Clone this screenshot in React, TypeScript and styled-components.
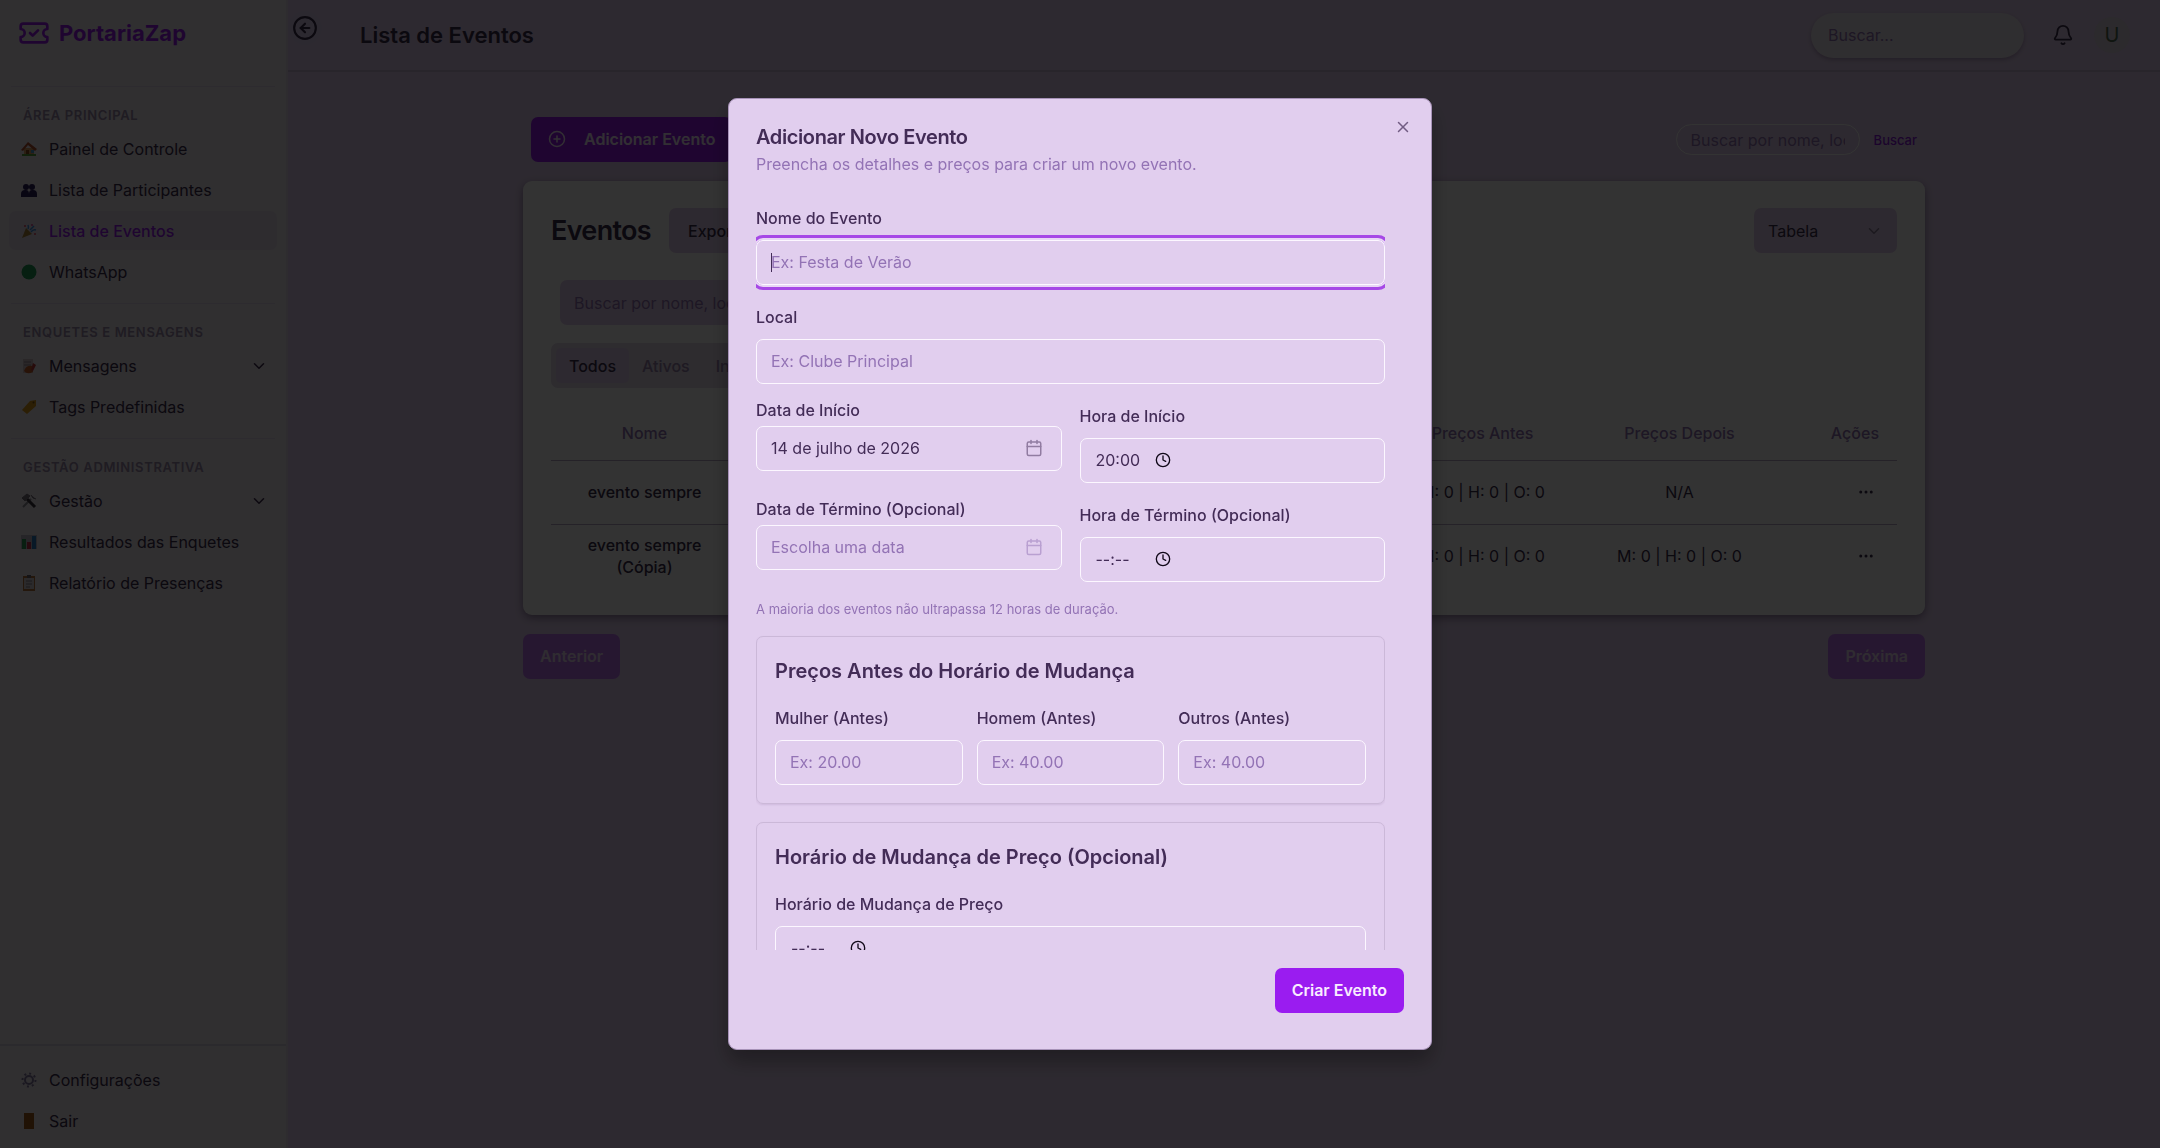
import React from "react";
import styled, { createGlobalStyle, css } from "styled-components";
import {
  Bell,
  Calendar,
  ChevronDown,
  CircleArrowLeft,
  CirclePlus,
  Clock,
  Ellipsis,
  TicketCheck,
  X,
} from "lucide-react";

const color = {
  lavender: "#e1ceee",
  sidebar: "#efe8f1",
  white: "#ffffff",
  ink: "#432c57",
  text: "#3b2d4c",
  muted: "#9373b5",
  primary: "#9a1cf0",
  line: "#cbb8d8",
};

const GlobalStyle = createGlobalStyle`
  *, *::before, *::after { box-sizing: border-box; }
  body {
    margin: 0;
    background: ${color.lavender};
    color: ${color.text};
    font-family: Inter, "Liberation Sans", sans-serif;
    font-size: 16px;
    line-height: 22px;
  }
  button, input, select { font: inherit; color: inherit; margin: 0; }
  button { cursor: pointer; }
  h1, h2, h3, p, ul { margin: 0; padding: 0; }
`;

/* ---------- shell ---------- */

const Shell = styled.div`
  display: grid;
  grid-template-columns: 288px minmax(0, 1fr);
  min-height: 100vh;
`;

const Sidebar = styled.aside`
  display: flex;
  flex-direction: column;
  background: ${color.sidebar};
  border-right: 2px solid #e6dcea;
`;

const Brand = styled.a`
  display: flex;
  align-items: center;
  gap: 9px;
  height: 66px;
  padding: 0 18px;
  margin-bottom: 20px;
  color: ${color.primary};
  font-size: 22px;
  font-weight: 700;
  text-decoration: none;
`;

const NavGroup = styled.section`
  margin: 0 11px;
  padding: 17px 0 10px;
  border-top: 1px solid #e2d6e8;
`;

const NavTitle = styled.h2`
  padding: 0 12px;
  margin-bottom: 3px;
  font-size: 13px;
  line-height: 22px;
  font-weight: 600;
  letter-spacing: 0.05em;
  text-transform: uppercase;
  color: #9b8aab;
`;

const NavList = styled.ul`
  list-style: none;
`;

const NavLink = styled.a<{ $active?: boolean }>`
  display: flex;
  align-items: center;
  gap: 12px;
  height: 39px;
  margin: 0 -2px 2px;
  padding: 0 9px 0 12px;
  border-radius: 7px;
  color: ${color.text};
  text-decoration: none;
  svg:last-child { margin-left: auto; }
  ${(p) =>
    p.$active &&
    css`
      background: #e6dceb;
      color: ${color.primary};
      font-weight: 500;
    `}
`;

const NavFooter = styled.nav`
  margin-top: auto;
  padding: 14px 11px 6px;
  border-top: 2px solid #d8cfe0;
`;

const Main = styled.div`
  display: flex;
  flex-direction: column;
  min-width: 0;
`;

const Header = styled.header`
  display: flex;
  align-items: center;
  height: 72px;
  padding-right: 30px;
  border-bottom: 2px solid #c8b8d4;
`;

const Collapse = styled.button`
  display: grid;
  place-items: center;
  align-self: flex-start;
  width: 34px;
  height: 34px;
  margin: 11px 38px 0 0;
  padding: 0;
  border: 0;
  border-radius: 50%;
  background: #dccdf0;
`;

const PageTitle = styled.h1`
  margin-right: auto;
  font-size: 22px;
  line-height: 30px;
  font-weight: 600;
`;

const HeaderSearch = styled.input`
  width: 213px;
  height: 45px;
  margin-right: 21px;
  padding: 0 17px;
  border: 0;
  border-radius: 23px;
  background: #ece4ee;
  box-shadow: 0 2px 4px rgba(60, 30, 80, 0.3);
  &::placeholder { color: ${color.muted}; opacity: 1; }
`;

const IconButton = styled.button`
  display: grid;
  place-items: center;
  width: 36px;
  height: 36px;
  padding: 0;
  border: 0;
  background: none;
`;

const Avatar = styled.span`
  display: grid;
  place-items: center;
  width: 36px;
  height: 36px;
  margin-left: 13px;
  border-radius: 50%;
  background: #dccfe0;
  font-size: 20px;
  color: #4f6b50;
`;

const Content = styled.main`
  width: calc(100% - 54px);
  max-width: 1402px;
  margin: 0 auto;
  padding-top: 45px;
`;

const Toolbar = styled.div`
  display: flex;
  justify-content: space-between;
  align-items: center;
  padding: 0 8px;
  margin-bottom: 19px;
`;

const PrimaryButton = styled.button<{ $gap?: number }>`
  display: inline-flex;
  align-items: center;
  gap: ${(p) => p.$gap ?? 0}px;
  height: 45px;
  padding: 0 17px 2px;
  border: 0;
  border-radius: 7px;
  background: ${color.primary};
  color: #f9ecff;
  font-weight: 600;
  &:disabled { opacity: 0.5; }
`;

const FilterForm = styled.form`
  display: flex;
  align-items: center;
  gap: 14px;
`;

const FilterInput = styled.input`
  width: 184px;
  height: 31px;
  padding: 0 14px;
  border: 1px solid #ffffff;
  border-radius: 16px;
  background: transparent;
  &::placeholder { color: ${color.muted}; opacity: 1; }
`;

const FilterButton = styled.button`
  padding: 0;
  border: 0;
  background: none;
  font-size: 13px;
  font-weight: 500;
  color: #8a18dc;
`;

const Card = styled.section`
  padding: 27px 28px;
  border-radius: 9px;
  background: ${color.white};
  box-shadow: 0 3px 8px rgba(40, 20, 60, 0.45);
`;

const CardHead = styled.div`
  display: flex;
  align-items: center;
  gap: 18px;
  margin-bottom: 27px;
`;

const CardTitle = styled.h2`
  font-size: 27px;
  line-height: 36px;
  font-weight: 600;
  letter-spacing: -0.025em;
`;

const ExportButton = styled.button`
  height: 45px;
  padding: 0 19px;
  border: 0;
  border-radius: 7px;
  background: ${color.lavender};
  font-weight: 500;
`;

const SelectWrap = styled.div`
  display: grid;
  align-items: center;
  width: 143px;
  margin-left: auto;
  & > * { grid-area: 1 / 1; }
  svg { justify-self: end; margin-right: 14px; opacity: 0.5; pointer-events: none; }
`;

const Select = styled.select`
  appearance: none;
  width: 100%;
  height: 45px;
  padding: 0 14px;
  border: 0;
  border-radius: 7px;
  background: ${color.lavender};
`;

const CardSearch = styled.input`
  display: block;
  width: 432px;
  height: 45px;
  margin: 0 0 18px 9px;
  padding: 0 14px;
  border: 0;
  border-radius: 7px;
  background: ${color.lavender};
  &::placeholder { color: ${color.muted}; opacity: 1; }
`;

const Tabs = styled.div`
  display: flex;
  width: fit-content;
  height: 45px;
  padding: 5px;
  margin-bottom: 18px;
  border-radius: 7px;
  background: #e4d9ea;
`;

const Tab = styled.button<{ $active?: boolean }>`
  padding: 0 13px;
  border: 0;
  border-radius: 5px;
  background: ${(p) => (p.$active ? color.lavender : "transparent")};
  color: ${(p) => (p.$active ? color.text : "#9780ac")};
  font-weight: 500;
`;

const Table = styled.table`
  width: 100%;
  table-layout: fixed;
  border-collapse: collapse;
  text-align: center;
  th { height: 54px; padding: 0 18px; font-weight: 500; color: ${color.muted}; }
  td { height: 64px; padding: 9px 18px; }
  th:last-child, td:last-child { text-align: right; }
  thead tr, tbody tr:not(:last-child) { border-bottom: 1px solid #b9aac6; }
`;

const Col = styled.col<{ $w?: number }>`
  width: ${(p) => (p.$w ? `${p.$w}px` : "auto")};
`;

const NameCell = styled.td`
  font-weight: 500;
`;

const RowMenu = styled.button`
  width: 26px;
  height: 36px;
  padding: 0;
  border: 0;
  background: none;
  vertical-align: middle;
  svg { display: block; margin: auto; }
`;

const Pager = styled.nav`
  display: flex;
  justify-content: space-between;
  margin-top: 19px;
`;

/* ---------- dialog ---------- */

const Overlay = styled.div`
  position: fixed;
  inset: 0;
  display: grid;
  place-items: center;
  background: rgba(0, 0, 0, 0.8);
`;

const Dialog = styled.div`
  position: relative;
  display: flex;
  flex-direction: column;
  width: 704px;
  max-width: 100%;
  max-height: calc(100vh - 196px);
  padding: 28px 27px 36px;
  border: 1px solid #a792b8;
  border-radius: 9px;
  background: ${color.lavender};
  color: ${color.ink};
  box-shadow: 0 12px 20px rgba(0, 0, 0, 0.3);
`;

const DialogTitle = styled.h2`
  font-size: 20px;
  line-height: 20px;
  font-weight: 600;
  letter-spacing: -0.02em;
`;

const DialogText = styled.p`
  margin: 6px 0 18px;
  line-height: 23px;
  color: ${color.muted};
`;

const CloseButton = styled.button`
  position: absolute;
  top: 19px;
  right: 19px;
  padding: 0;
  border: 0;
  background: none;
  opacity: 0.7;
  svg { display: block; }
`;

const FormScroll = styled.div`
  flex: 1 1 auto;
  min-height: 0;
  overflow-y: auto;
  scrollbar-width: none;
  margin-right: 19px;
  padding: 10px 0;
  display: flex;
  flex-direction: column;
  gap: 18px;
  & > * { flex-shrink: 0; }
`;

const Field = styled.div<{ $tight?: boolean }>`
  display: flex;
  flex-direction: column;
  gap: ${(p) => (p.$tight ? 8 : 7)}px;
  min-width: 0;
  label {
    font-weight: 500;
    line-height: ${(p) => (p.$tight ? 16 : 29)}px;
  }
`;

const boxStyle = css`
  width: 100%;
  height: 45px;
  padding: 0 14px 1px;
  border: 1px solid #fcf7ff;
  border-radius: 7px;
  background: transparent;
`;

const Input = styled.input`
  ${boxStyle}
  outline: none;
  &:focus {
    caret-color: transparent;
    box-shadow: 0 0 0 2px #e8d6f5, 0 0 0 5px #a648e6;
  }
  &::placeholder { color: ${color.muted}; opacity: 1; }
`;

const CaretBox = styled.div`
  position: relative;
  display: flex;
  &:focus-within::after {
    content: "";
    position: absolute;
    left: 15px;
    top: 13px;
    width: 1px;
    height: 19px;
    background: ${color.ink};
  }
`;

const DateButton = styled.button<{ $empty?: boolean }>`
  ${boxStyle}
  display: flex;
  align-items: center;
  justify-content: space-between;
  padding-right: 18px;
  color: ${(p) => (p.$empty ? color.muted : color.ink)};
  svg { opacity: 0.5; }
`;

const TimeBox = styled.div`
  ${boxStyle}
  display: flex;
  align-items: center;
  padding-left: 15px;
  svg { color: #100818; }
`;

const TimeInput = styled.input`
  width: 59px;
  padding: 0;
  border: 0;
  outline: none;
  background: transparent;
  &::placeholder { color: ${color.ink}; opacity: 1; }
`;

const TwoCols = styled.div`
  display: grid;
  grid-template-columns: 1fr 1fr;
  gap: 18px;
  align-items: start;
`;

const Hint = styled.p`
  font-size: 13px;
  line-height: 18px;
  color: ${color.muted};
`;

const Panel = styled.section`
  padding: 18px;
  border: 1px solid ${color.line};
  border-radius: 7px;
  box-shadow: 0 1px 2px rgba(80, 40, 110, 0.12);
`;

const PanelTitle = styled.h3`
  margin-bottom: 17px;
  font-size: 20px;
  line-height: 32px;
  font-weight: 600;
`;

const ThreeCols = styled.div`
  display: grid;
  grid-template-columns: repeat(3, minmax(0, 1fr));
  gap: 14px;
`;

const DialogFooter = styled.div`
  display: flex;
  justify-content: flex-end;
  padding-top: 18px;
`;

/* ---------- small coloured nav glyphs ---------- */

const glyphs: Record<string, React.ReactNode> = {
  house: (
    <>
      <rect x="3" y="7" width="10" height="8" fill="#d9a066" />
      <path d="M0 9 7 1l9 7-2 2-7-6-5 6z" fill="#b5502c" />
      <rect x="5" y="9" width="3" height="6" fill="#8a4b22" />
      <rect x="10" y="9" width="3" height="3" fill="#4aa0d8" />
      <rect x="1" y="13" width="14" height="2" fill="#5da33c" />
    </>
  ),
  people: (
    <g fill="#2b1f5c">
      <circle cx="5" cy="5" r="3" />
      <circle cx="11" cy="5" r="3" />
      <path d="M0 15v-3q0-4 4-4h1q3 0 3 4v3zM8 15v-3q0-4 3-4h1q4 0 4 4v3z" />
    </g>
  ),
  party: (
    <>
      <path d="M1 15 5 5l6 6z" fill="#a8813a" />
      <path d="M7 6q1-2 0-4M10 9q2-3 5-2M9 7l4-4" stroke="#3f8fe0" strokeWidth="1.5" fill="none" />
      <circle cx="4" cy="3" r="1" fill="#e0435c" />
      <circle cx="11" cy="2" r="1" fill="#d6439c" />
      <circle cx="14" cy="11" r="1" fill="#e0435c" />
    </>
  ),
  green: <circle cx="8" cy="8" r="7.5" fill="#1f9a55" />,
  memo: (
    <>
      <rect x="2" y="1" width="10" height="14" fill="#cfc0c8" />
      <path d="M3 4h7M3 7h7" stroke="#9a8a96" />
      <path d="M3 13q2-6 8-5l1 6q-6 3-9-1z" fill="#c9622c" />
      <path d="M12 5l3 2-3 6-2-1z" fill="#c03a3a" />
    </>
  ),
  tag: (
    <>
      <path d="M1 11 9 2l6-1v6l-9 8z" fill="#d99a1c" />
      <circle cx="12.5" cy="3.5" r="1" fill="#7a5510" />
    </>
  ),
  tools: (
    <>
      <path d="M2 14 10 6" stroke="#8c8c94" strokeWidth="2" />
      <path d="M5 5l9 9" stroke="#3a343e" strokeWidth="3" />
      <path d="M1 5l5-4 3 2-5 5zM10 2l2 3 3 1" stroke="#77727c" fill="#77727c" />
    </>
  ),
  chart: (
    <>
      <rect x="0" y="1" width="16" height="14" fill="#bdb8c6" />
      <rect x="1" y="5" width="4" height="10" fill="#2c9a58" />
      <rect x="6" y="8" width="4" height="7" fill="#c2364a" />
      <rect x="11" y="2" width="4" height="13" fill="#2c7fc4" />
    </>
  ),
  clipboard: (
    <>
      <rect x="2" y="1" width="12" height="15" fill="#b5743f" />
      <rect x="3" y="3" width="10" height="11" fill="#d8cfd8" />
      <rect x="6" y="0" width="4" height="3" fill="#6a6470" />
      <path d="M5 6h6M5 9h6M5 12h4" stroke="#8a8290" />
    </>
  ),
  gear: (
    <g fill="none" stroke="#8479a0">
      <circle cx="8" cy="8" r="4" strokeWidth="2" />
      <circle cx="8" cy="8" r="6.5" strokeWidth="2" strokeDasharray="2 3" />
    </g>
  ),
  door: <rect x="3" y="0" width="10" height="16" fill="#a05a1c" />,
};

const Glyph = ({ name }: { name: string }) => (
  <svg width="16" height="16" viewBox="0 0 16 16" aria-hidden="true">
    {glyphs[name]}
  </svg>
);

type Item = { icon: string; label: string; active?: boolean; more?: boolean };

const groups: { title: string; items: Item[] }[] = [
  {
    title: "Área Principal",
    items: [
      { icon: "house", label: "Painel de Controle" },
      { icon: "people", label: "Lista de Participantes" },
      { icon: "party", label: "Lista de Eventos", active: true },
      { icon: "green", label: "WhatsApp" },
    ],
  },
  {
    title: "Enquetes e Mensagens",
    items: [
      { icon: "memo", label: "Mensagens", more: true },
      { icon: "tag", label: "Tags Predefinidas" },
    ],
  },
  {
    title: "Gestão Administrativa",
    items: [
      { icon: "tools", label: "Gestão", more: true },
      { icon: "chart", label: "Resultados das Enquetes" },
      { icon: "clipboard", label: "Relatório de Presenças" },
    ],
  },
];

const NavItem = ({ icon, label, active, more }: Item) => (
  <NavLink href="#" $active={active}>
    <Glyph name={icon} />
    <span>{label}</span>
    {more && <ChevronDown size={18} />}
  </NavLink>
);

const rows = [
  { name: "evento sempre", before: "M: 0 | H: 0 | O: 0", after: "N/A" },
  { name: "evento sempre (Cópia)", before: "M: 0 | H: 0 | O: 0", after: "M: 0 | H: 0 | O: 0" },
];

const prices = [
  { id: "mulher", label: "Mulher (Antes)", placeholder: "Ex: 20.00" },
  { id: "homem", label: "Homem (Antes)", placeholder: "Ex: 40.00" },
  { id: "outros", label: "Outros (Antes)", placeholder: "Ex: 40.00" },
];

const TimeField = ({ id, label, value }: { id: string; label: string; value?: string }) => (
  <Field>
    <label htmlFor={id}>{label}</label>
    <TimeBox>
      <TimeInput id={id} defaultValue={value} placeholder="--:--" />
      <Clock size={16} />
    </TimeBox>
  </Field>
);

const DateField = ({ id, label, value }: { id: string; label: string; value?: string }) => (
  <Field $tight>
    <label htmlFor={id}>{label}</label>
    <DateButton id={id} type="button" $empty={!value}>
      {value ?? "Escolha uma data"}
      <Calendar size={18} />
    </DateButton>
  </Field>
);

export default function App() {
  return (
    <>
      <GlobalStyle />
      <Shell>
        <Sidebar>
          <Brand href="#">
            <TicketCheck size={32} />
            PortariaZap
          </Brand>
          {groups.map((g) => (
            <NavGroup key={g.title}>
              <NavTitle>{g.title}</NavTitle>
              <NavList>
                {g.items.map((i) => (
                  <li key={i.label}>
                    <NavItem {...i} />
                  </li>
                ))}
              </NavList>
            </NavGroup>
          ))}
          <NavFooter>
            <NavItem icon="gear" label="Configurações" />
            <NavItem icon="door" label="Sair" />
          </NavFooter>
        </Sidebar>

        <Main>
          <Header>
            <Collapse aria-label="Recolher menu">
              <CircleArrowLeft size={26} />
            </Collapse>
            <PageTitle>Lista de Eventos</PageTitle>
            <HeaderSearch placeholder="Buscar..." aria-label="Busca" />
            <IconButton aria-label="Notificações">
              <Bell size={22} />
            </IconButton>
            <Avatar>U</Avatar>
          </Header>

          <Content>
            <Toolbar>
              <PrimaryButton $gap={18}>
                <CirclePlus size={18} />
                Adicionar Evento
              </PrimaryButton>
              <FilterForm>
                <FilterInput placeholder="Buscar por nome, local..." aria-label="Filtro" />
                <FilterButton type="button">Buscar</FilterButton>
              </FilterForm>
            </Toolbar>

            <Card>
              <CardHead>
                <CardTitle>Eventos</CardTitle>
                <ExportButton>Exportar</ExportButton>
                <SelectWrap>
                  <Select aria-label="Visualização" defaultValue="Tabela">
                    <option>Tabela</option>
                  </Select>
                  <ChevronDown size={18} />
                </SelectWrap>
              </CardHead>
              <CardSearch placeholder="Buscar por nome, local..." aria-label="Buscar eventos" />
              <Tabs role="tablist">
                <Tab role="tab" $active>Todos</Tab>
                <Tab role="tab">Ativos</Tab>
                <Tab role="tab">Inativos</Tab>
              </Tabs>
              <Table>
                <colgroup>
                  <Col $w={187} />
                  <Col />
                  <Col $w={197} />
                  <Col $w={197} />
                  <Col $w={119} />
                </colgroup>
                <thead>
                  <tr>
                    <th>Nome</th>
                    <th />
                    <th>Preços Antes</th>
                    <th>Preços Depois</th>
                    <th>Ações</th>
                  </tr>
                </thead>
                <tbody>
                  {rows.map((r) => (
                    <tr key={r.name}>
                      <NameCell>{r.name}</NameCell>
                      <td />
                      <td>{r.before}</td>
                      <td>{r.after}</td>
                      <td>
                        <RowMenu aria-label="Ações do evento">
                          <Ellipsis size={18} />
                        </RowMenu>
                      </td>
                    </tr>
                  ))}
                </tbody>
              </Table>
            </Card>

            <Pager>
              <PrimaryButton disabled>Anterior</PrimaryButton>
              <PrimaryButton disabled>Próxima</PrimaryButton>
            </Pager>
          </Content>
        </Main>
      </Shell>

      <Overlay>
        <Dialog role="dialog" aria-modal="true" aria-labelledby="dialog-title">
          <DialogTitle id="dialog-title">Adicionar Novo Evento</DialogTitle>
          <DialogText>Preencha os detalhes e preços para criar um novo evento.</DialogText>
          <FormScroll>
            <Field>
              <label htmlFor="nome">Nome do Evento</label>
              <CaretBox>
                <Input id="nome" placeholder="Ex: Festa de Verão" autoFocus />
              </CaretBox>
            </Field>
            <Field>
              <label htmlFor="local">Local</label>
              <Input id="local" placeholder="Ex: Clube Principal" />
            </Field>
            <TwoCols>
              <DateField id="data-inicio" label="Data de Início" value="14 de julho de 2026" />
              <TimeField id="hora-inicio" label="Hora de Início" value="20:00" />
              <DateField id="data-fim" label="Data de Término (Opcional)" />
              <TimeField id="hora-fim" label="Hora de Término (Opcional)" />
            </TwoCols>
            <Hint>A maioria dos eventos não ultrapassa 12 horas de duração.</Hint>
            <Panel>
              <PanelTitle>Preços Antes do Horário de Mudança</PanelTitle>
              <ThreeCols>
                {prices.map((p) => (
                  <Field key={p.id}>
                    <label htmlFor={p.id}>{p.label}</label>
                    <Input id={p.id} placeholder={p.placeholder} />
                  </Field>
                ))}
              </ThreeCols>
            </Panel>
            <Panel>
              <PanelTitle>Horário de Mudança de Preço (Opcional)</PanelTitle>
              <TimeField id="hora-mudanca" label="Horário de Mudança de Preço" />
            </Panel>
          </FormScroll>
          <DialogFooter>
            <PrimaryButton>Criar Evento</PrimaryButton>
          </DialogFooter>
          <CloseButton aria-label="Fechar">
            <X size={18} />
          </CloseButton>
        </Dialog>
      </Overlay>
    </>
  );
}
